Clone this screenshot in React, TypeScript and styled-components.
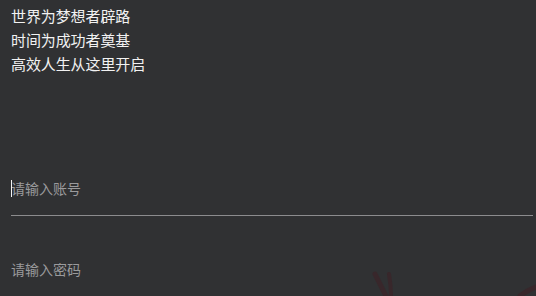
import React from "react";
import styled, { createGlobalStyle } from "styled-components";

const Global = createGlobalStyle`
  html, body { margin: 0; padding: 0; background: #303133; }
  body { font-family: "Noto Sans CJK SC", "Noto Sans", sans-serif; overflow: hidden; }
`;

const Page = styled.div`
  position: relative;
  width: 536px;
  height: 296px;
  background: #303133;
  overflow: hidden;
  padding: 4px 3px 0 11px;
  box-sizing: border-box;
`;

const Slogan = styled.div`
  display: flex;
  flex-direction: column;
`;

const Line = styled.div`
  font-size: 15px;
  line-height: 24px;
  color: #f2f2f2;
  letter-spacing: -0.1px;
`;

const Form = styled.div`
  display: flex;
  flex-direction: column;
  margin-top: 94px;
`;

const Field = styled.div<{ $underline?: boolean; $top: number; $bottom: number }>`
  position: relative;
  padding-top: ${(p) => p.$top}px;
  padding-bottom: ${(p) => p.$bottom}px;
  border-bottom: ${(p) => (p.$underline ? "1px solid #8c8c8e" : "none")};
`;

const Input = styled.input`
  display: block;
  width: 100%;
  box-sizing: border-box;
  border: none;
  outline: none;
  background: transparent;
  padding: 0;
  height: 20px;
  line-height: 20px;
  font-family: "Noto Sans CJK SC", "Noto Sans", sans-serif;
  font-size: 14px;
  color: #eee;
  caret-color: transparent;
  &::placeholder {
    color: #9a9a9c;
  }
`;

const Caret = styled.span`
  position: absolute;
  left: 0;
  top: 10px;
  width: 1px;
  height: 17px;
  background: #f4f4f4;
`;

const Strokes = styled.svg`
  position: absolute;
  left: 360px;
  top: 260px;
  pointer-events: none;
`;

export default function App() {
  return (
    <>
      <Global />
      <Page>
        <Slogan>
          <Line>世界为梦想者辟路</Line>
          <Line>时间为成功者奠基</Line>
          <Line>高效人生从这里开启</Line>
        </Slogan>
        <Form>
          <Field $underline $top={8} $bottom={17}>
            <Caret />
            <Input placeholder="请输入账号" />
          </Field>
          <Field $top={43} $bottom={20}>
            <Input type="password" placeholder="请输入密码" />
          </Field>
        </Form>
        <Strokes width="176" height="36" viewBox="0 0 176 36">
          <path d="M15 14 C18 20, 22 28, 26 36" stroke="#38272b" strokeWidth="5" fill="none" strokeLinecap="round" />
          <path d="M29 14 C30 20, 31 28, 31 36" stroke="#38272b" strokeWidth="4" fill="none" strokeLinecap="round" />
          <path d="M160 36 C165 32, 170 29, 176 27" stroke="#38272b" strokeWidth="5" fill="none" strokeLinecap="round" />
        </Strokes>
      </Page>
    </>
  );
}
